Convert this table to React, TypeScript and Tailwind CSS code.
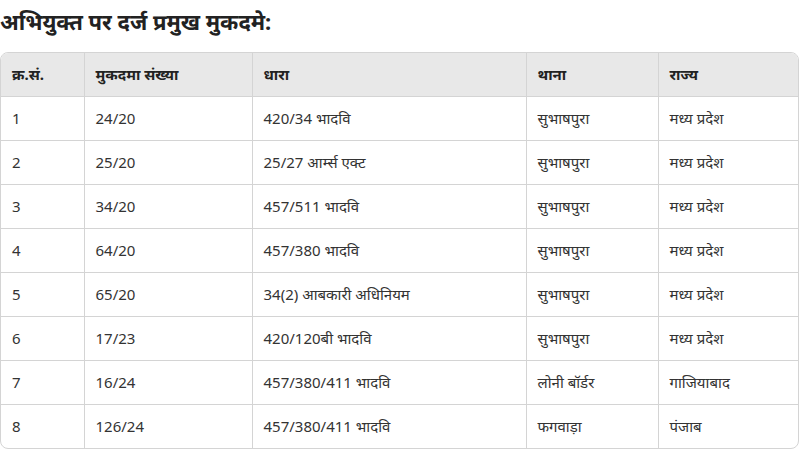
import React from "react";

const rows = [
  ["1", "24/20", "420/34 भादवि", "सुभाषपुरा", "मध्य प्रदेश"],
  ["2", "25/20", "25/27 आर्म्स एक्ट", "सुभाषपुरा", "मध्य प्रदेश"],
  ["3", "34/20", "457/511 भादवि", "सुभाषपुरा", "मध्य प्रदेश"],
  ["4", "64/20", "457/380 भादवि", "सुभाषपुरा", "मध्य प्रदेश"],
  ["5", "65/20", "34(2) आबकारी अधिनियम", "सुभाषपुरा", "मध्य प्रदेश"],
  ["6", "17/23", "420/120बी भादवि", "सुभाषपुरा", "मध्य प्रदेश"],
  ["7", "16/24", "457/380/411 भादवि", "लोनी बॉर्डर", "गाजियाबाद"],
  ["8", "126/24", "457/380/411 भादवि", "फगवाड़ा", "पंजाब"],
];

const headers = ["क्र.सं.", "मुकदमा संख्या", "धारा", "थाना", "राज्य"];
const widths = ["w-[83px]", "w-[168px]", "w-[274px]", "w-[132px]", "w-[141px]"];

export default function App() {
  return (
    <div className="w-[800px] h-[450px] overflow-hidden bg-white text-[#333]" style={{ fontFamily: '"Noto Sans", "Liberation Sans", sans-serif' }}>
      <h2 className="text-[22px] font-bold leading-[30px] pt-[6px] pb-[16px] text-[#222]">अभियुक्त पर दर्ज प्रमुख मुकदमे:</h2>
      <div className="w-[799px] border border-[#d4d4d4] rounded-[8px] overflow-hidden">
        <table className="w-full border-collapse table-fixed text-[15px]">
          <thead>
            <tr className="bg-[#e8e8e8] h-[43px]">
              {headers.map((h, i) => (
                <th key={i} className={`${widths[i]} text-left font-bold px-[11px] text-[#222] ${i > 0 ? "border-l border-[#d4d4d4]" : ""}`}>{h}</th>
              ))}
            </tr>
          </thead>
          <tbody>
            {rows.map((r, ri) => (
              <tr key={ri} className="h-[44px] border-t border-[#d4d4d4]">
                {r.map((c, ci) => (
                  <td key={ci} className={`px-[11px] ${ci > 0 ? "border-l border-[#d4d4d4]" : ""}`}>{c}</td>
                ))}
              </tr>
            ))}
          </tbody>
        </table>
      </div>
    </div>
  );
}
